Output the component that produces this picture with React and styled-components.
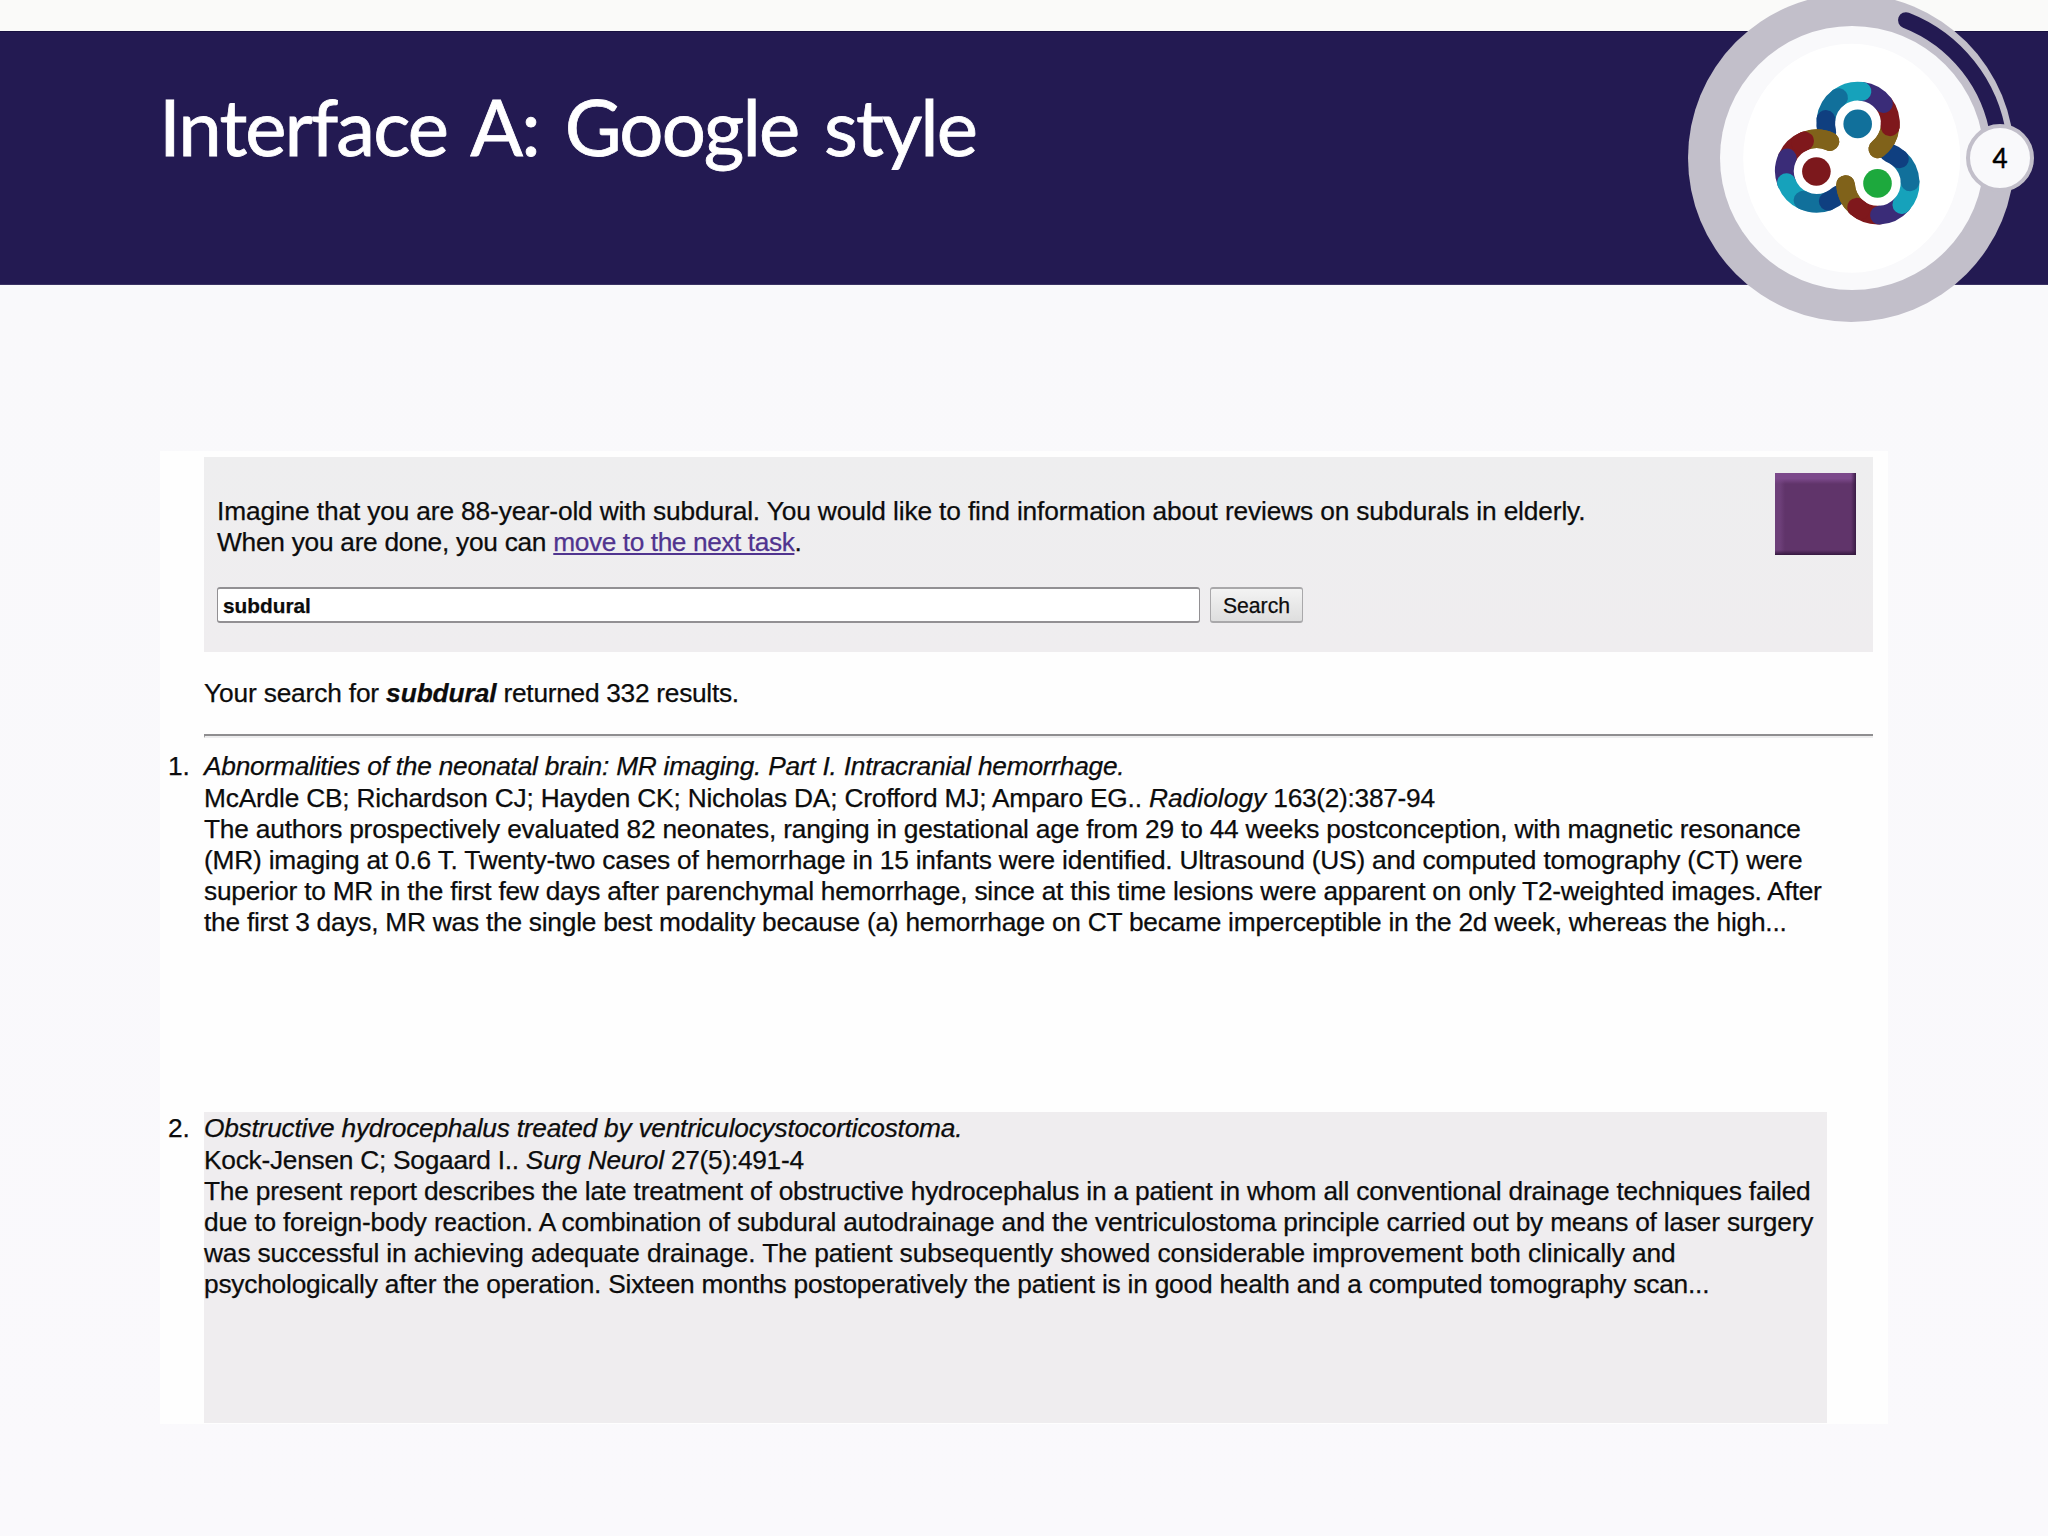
import React from 'react'
import styled, { createGlobalStyle } from 'styled-components'

const GlobalStyle = createGlobalStyle`
    * {
        box-sizing: border-box;
    }
    body {
        margin: 0;
        background-color: #f9f9fb;
    }
`

const tasks = [
    [{ text: 'Imagine that you are 88-year-old with subdural. You would like to find information about reviews on subdurals in elderly.', spacing: -0.14 }],
    [
        { text: 'When you are done, you can ', spacing: -0.27 },
        { text: 'move to the next task', spacing: -0.42, link: true },
        { text: '.', spacing: 0 },
    ],
]

const results = [
    {
        title: { text: 'Abnormalities of the neonatal brain: MR imaging. Part I. Intracranial hemorrhage.', spacing: -0.24 },
        authors: { text: 'McArdle CB; Richardson CJ; Hayden CK; Nicholas DA; Crofford MJ; Amparo EG.. ', spacing: -0.195 },
        journal: { text: 'Radiology', spacing: 0.05 },
        issue: { text: ' 163(2):387-94', spacing: -0.29 },
        abstract: [
            { text: 'The authors prospectively evaluated 82 neonates, ranging in gestational age from 29 to 44 weeks postconception, with magnetic resonance', spacing: -0.203 },
            { text: '(MR) imaging at 0.6 T. Twenty-two cases of hemorrhage in 15 infants were identified. Ultrasound (US) and computed tomography (CT) were', spacing: -0.205 },
            { text: 'superior to MR in the first few days after parenchymal hemorrhage, since at this time lesions were apparent on only T2-weighted images. After', spacing: -0.238 },
            { text: 'the first 3 days, MR was the single best modality because (a) hemorrhage on CT became imperceptible in the 2d week, whereas the high...', spacing: -0.238 },
        ],
    },
    {
        title: { text: 'Obstructive hydrocephalus treated by ventriculocystocorticostoma.', spacing: -0.23 },
        authors: { text: 'Kock-Jensen C; Sogaard I.. ', spacing: -0.26 },
        journal: { text: 'Surg Neurol', spacing: -0.21 },
        issue: { text: ' 27(5):491-4', spacing: -0.28 },
        abstract: [
            { text: 'The present report describes the late treatment of obstructive hydrocephalus in a patient in whom all conventional drainage techniques failed', spacing: -0.197 },
            { text: 'due to foreign-body reaction. A combination of subdural autodrainage and the ventriculostoma principle carried out by means of laser surgery', spacing: -0.2 },
            { text: 'was successful in achieving adequate drainage. The patient subsequently showed considerable improvement both clinically and', spacing: -0.12 },
            { text: 'psychologically after the operation. Sixteen months postoperatively the patient is in good health and a computed tomography scan...', spacing: -0.215 },
        ],
    },
]

// every ring is the same six beads, listed from the end bead back to the first one
const beads = [
    { color: '#80621a', from: 6, to: 52 },
    { color: '#7f181c', from: 323, to: 366 },
    { color: '#3a2c78', from: 277, to: 322 },
    { color: '#16a2bb', from: 233, to: 277 },
    { color: '#11709b', from: 187, to: 233 },
    { color: '#0f3f80', from: 165, to: 187 },
]

const rings = [
    { x: 98, y: 53, turn: 0, dot: '#11709b' },
    { x: 56.7, y: 100.6, turn: -118, dot: '#7c181c' },
    { x: 117.8, y: 112.5, turn: 125, dot: '#1da93d' },
]

const arc = (cx, cy, r, from, to) => {
    const a = (from * Math.PI) / 180
    const b = (to * Math.PI) / 180
    return `M${cx + r * Math.cos(a)} ${cy + r * Math.sin(a)}A${r} ${r} 0 0 1 ${cx + r * Math.cos(b)} ${cy + r * Math.sin(b)}`
}

function Bead({ ring, bead, from }) {
    const start = from === undefined ? bead.from : from
    return <path d={arc(ring.x, ring.y, 32.3, start + ring.turn, bead.to + ring.turn)} stroke={bead.color} />
}

function Medallion() {
    return (
        <MedallionBox>
            <svg width="360" height="322" viewBox="1688 0 360 322">
                <ellipse cx="1851.2" cy="158" rx="163.2" ry="164" fill="#c2bfca" />
                <circle cx="1852" cy="158" r="132" fill="#f9f9fb" />
                <ellipse cx="1851.7" cy="158.2" rx="108.5" ry="114.5" fill="#fff" />
                <g transform="translate(1760 70.4)" fill="none" strokeWidth="18.8" strokeLinecap="round">
                    {rings.map((ring) => beads.map((bead) => (
                        <Bead key={ring.dot + bead.color} ring={ring} bead={bead} />
                    )))}
                    {/* the end bead lies over the first bead of the next ring */}
                    {rings.map((ring) => (
                        <g key={ring.dot}>
                            <Bead ring={ring} bead={beads[0]} from={20} />
                            <Bead ring={ring} bead={beads[1]} from={358} />
                            <circle cx={ring.x - 0.3} cy={ring.y + 0.5} r="14.3" fill={ring.dot} stroke="none" />
                        </g>
                    ))}
                </g>
                <path d={arc(1852, 158, 148, -68.6, -8)} fill="none" stroke="#231a52" strokeWidth="16" strokeLinecap="round" />
            </svg>
            <PageNumber>4</PageNumber>
        </MedallionBox>
    )
}

function Line({ parts }) {
    return (
        <TextLine>
            {parts.map((part) => (
                <Run
                    key={part.text}
                    as={part.link ? 'a' : 'span'}
                    href={part.link ? '#next' : undefined}
                    $spacing={part.spacing}
                    $link={part.link}
                    $italic={part.italic}
                    $bold={part.bold}
                >
                    {part.text}
                </Run>
            ))}
        </TextLine>
    )
}

function Result({ number, result, shaded }) {
    const { title, authors, journal, issue, abstract } = result
    return (
        <ResultItem $shaded={shaded}>
            <ResultNumber>{number}.</ResultNumber>
            <ResultBody $shaded={shaded}>
                <ResultTitle>
                    <Line parts={[{ ...title, italic: true }]} />
                </ResultTitle>
                <Line parts={[authors, { ...journal, italic: true }, issue]} />
                {abstract.map((line) => <Line key={line.text} parts={[line]} />)}
            </ResultBody>
        </ResultItem>
    )
}

function App() {
    return (
        <Page>
            <GlobalStyle />
            <Header>
                <Title>Interface A: Google style</Title>
                <Medallion />
            </Header>
            <Panel>
                <TaskBox>
                    <TaskContent>
                        {tasks.map((parts) => <Line key={parts[0].text} parts={parts} />)}
                        <SearchForm onSubmit={(e) => e.preventDefault()}>
                            <SearchInput defaultValue="subdural" />
                            <SearchButton>Search</SearchButton>
                        </SearchForm>
                    </TaskContent>
                    <Swatch />
                </TaskBox>
                <Summary>
                    <Line
                        parts={[
                            { text: 'Your search for ', spacing: -0.16 },
                            { text: 'subdural', spacing: -0.08, italic: true, bold: true },
                            { text: ' returned 332 results.', spacing: -0.28 },
                        ]}
                    />
                </Summary>
                <Divider />
                <ResultList>
                    {results.map((result, i) => (
                        <Result key={result.title.text} number={i + 1} result={result} shaded={i % 2 === 1} />
                    ))}
                </ResultList>
            </Panel>
        </Page>
    )
}

const Page = styled.div`
    width: 2048px;
    height: 1536px;
    padding-top: 31px;
    overflow: hidden;
    background: linear-gradient(#fafaf9 0, #fafaf9 31px, #f9f9fb 285px, #faf9fc 100%);
    font-family: "Liberation Sans", Arial, sans-serif;
    color: #0c0c0c;
    -webkit-text-stroke: 0.25px;
`

const Header = styled.header`
    position: relative;
    height: 254px;
    padding: 54px 0 0 159px;
    background-color: #231a52;
    border-top: 1px solid #17103f;
    border-bottom: 1px solid #3b3364;
`

const Title = styled.h1`
    margin: 0;
    font-family: Lato, "Open Sans", sans-serif;
    font-size: 78px;
    font-weight: 400;
    line-height: 80px;
    letter-spacing: -1.9px;
    word-spacing: 7.8px;
    white-space: nowrap;
    color: #fff;
    -webkit-text-stroke: 0.8px;
`

/* hangs over both edges of the header */
const MedallionBox = styled.div`
    position: absolute;
    top: -32px;
    right: 0;
    width: 360px;
    height: 322px;
    svg {
        display: block;
    }
`

const PageNumber = styled.div`
    position: absolute;
    top: 124px;
    left: 278px;
    width: 68px;
    height: 68px;
    border: 4px solid #c2bfca;
    border-radius: 50%;
    background-color: #f9f9fb;
    display: flex;
    align-items: center;
    justify-content: center;
    font-family: Lato, "Open Sans", sans-serif;
    font-size: 26px;
    line-height: 30px;
    color: #000;
    -webkit-text-stroke: 0.5px;
`

const Panel = styled.main`
    width: 1728px;
    height: 973px;
    margin: 166px 0 0 160px;
    padding: 6px 0 0 44px;
    background-color: #fefefe;
`

const TaskBox = styled.section`
    display: flex;
    justify-content: space-between;
    width: 1669px;
    height: 195px;
    padding: 16px 17px 0 13px;
    background: linear-gradient(#eeeeef, #efedef);
`

const TaskContent = styled.div`
    padding-top: 23px;
`

const TextLine = styled.div`
    height: 31px;
    font-size: 26.3px;
    line-height: 31px;
    font-feature-settings: "liga" 1;
    white-space: pre;
`

const Run = styled.span`
    letter-spacing: ${(props) => props.$spacing}px;
    font-style: ${(props) => (props.$italic ? 'italic' : 'normal')};
    font-weight: ${(props) => (props.$bold ? 'bold' : 'normal')};
    color: ${(props) => (props.$link ? '#50348f' : 'inherit')};
    text-decoration: ${(props) => (props.$link ? 'underline' : 'none')};
    text-decoration-thickness: 2px;
    text-decoration-skip-ink: none;
    text-underline-offset: 2px;
`

const SearchForm = styled.form`
    display: flex;
    gap: 10px;
    margin-top: 29px;
`

const SearchInput = styled.input`
    width: 983px;
    height: 36px;
    padding: 2px 5px 0;
    border: 2px solid #929093;
    border-left-width: 1px;
    border-right-width: 1px;
    border-radius: 3px;
    background-color: #fff;
    font: bold 20.8px "Liberation Sans", Arial, sans-serif;
    color: #0c0c0c;
    outline: none;
`

const SearchButton = styled.button`
    width: 93px;
    height: 36px;
    padding: 2px 0 0;
    border: 2px solid #a9a8aa;
    border-left-width: 1px;
    border-right-width: 1px;
    border-radius: 3px;
    background: linear-gradient(#f3f3f3, #dedede);
    font: 21.2px "Liberation Sans", Arial, sans-serif;
    color: #0c0c0c;
`

const Swatch = styled.div`
    width: 81px;
    height: 82px;
    background:
        linear-gradient(to top, #35183f, transparent) bottom / 100% 5px no-repeat,
        linear-gradient(to left, #3b1d46, transparent) right / 5px 100% no-repeat,
        linear-gradient(#7c498b 50%, #60346a00) top / 100% 11px no-repeat,
        linear-gradient(to right, #6d3f79 50%, #60346a00) left / 10px 100% no-repeat,
        #60346a;
`

const Summary = styled.div`
    padding-top: 26px;
    height: 82px;
`

const Divider = styled.hr`
    width: 1669px;
    height: 4px;
    margin: 0;
    border: 0;
    border-top: 2px solid #8f8e90;
    border-bottom: 2px solid #ededee;
    border-left: 1px solid #8f8e90;
`

const ResultList = styled.ol`
    list-style: none;
    margin: 0;
    padding: 0;
`

const ResultItem = styled.li`
    display: flex;
    height: ${(props) => (props.$shaded ? '311px' : '374px')};
    margin-left: -36px;
    padding-top: ${(props) => (props.$shaded ? '0' : '12px')};
`

const ResultNumber = styled.div`
    flex: none;
    width: 21px;
    margin-right: 15px;
    padding-top: 1px;
    font-size: 26.3px;
    line-height: 31px;
    letter-spacing: -0.2px;
    text-align: right;
`

const ResultBody = styled.div`
    width: 1623px;
    background-color: ${(props) => (props.$shaded ? '#efedef' : 'transparent')};
`

const ResultTitle = styled.div`
    padding-top: 1px;
    margin-bottom: 0.6px;
`

export default App
